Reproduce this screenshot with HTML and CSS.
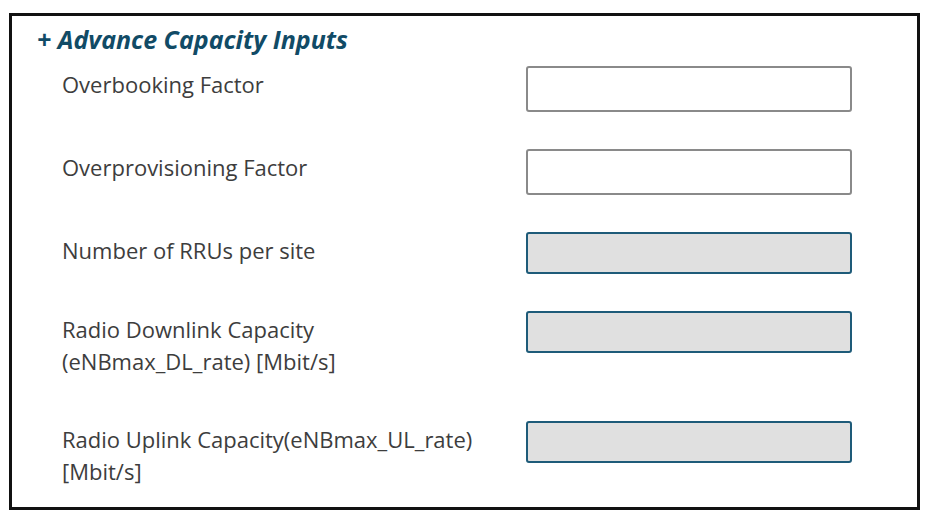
FILE: index.html
```html
<!DOCTYPE html>
<html lang="en">
<head>
<meta charset="utf-8">
<title>Advance Capacity Inputs</title>
<link rel="stylesheet" href="styles.css">
</head>
<body>
<section class="panel">
  <h2 class="panel-title">+ Advance Capacity Inputs</h2>
  <div class="form">
    <div class="row">
      <label class="label" for="f1">Overbooking Factor</label>
      <input class="field field-tall" id="f1" type="text">
    </div>
    <div class="row">
      <label class="label" for="f2">Overprovisioning Factor</label>
      <input class="field field-tall" id="f2" type="text">
    </div>
    <div class="row">
      <label class="label" for="f3">Number of RRUs per site</label>
      <input class="field field-disabled" id="f3" type="text" disabled>
    </div>
    <div class="row">
      <label class="label" for="f4">Radio Downlink Capacity (eNBmax_DL_rate) [Mbit/s]</label>
      <input class="field field-disabled" id="f4" type="text" disabled>
    </div>
    <div class="row">
      <label class="label" for="f5">Radio Uplink Capacity(eNBmax_UL_rate) [Mbit/s]</label>
      <input class="field field-disabled" id="f5" type="text" disabled>
    </div>
  </div>
</section>
</body>
</html>
```
FILE: styles.css
```css
html, body {
  margin: 0;
  padding: 0;
  background: #ffffff;
}

body {
  font-family: "Open Sans", "Noto Sans", "Liberation Sans", sans-serif;
}

.panel {
  box-sizing: border-box;
  width: 911px;
  height: 497px;
  margin: 13px 0 0 9px;
  border: 3px solid #111111;
  padding: 8px 0 0 25px;
  background: #ffffff;
}

.panel-title {
  margin: 0;
  font-size: 25px;
  line-height: 30px;
  font-weight: 700;
  font-style: italic;
  color: #114b66;
}

.form {
  display: flex;
  flex-direction: column;
  gap: 37px;
  margin-top: 12px;
  padding-left: 25px;
}

.row {
  display: flex;
  align-items: flex-start;
}

.label {
  box-sizing: border-box;
  flex: 0 0 464px;
  width: 464px;
  padding: 2px 40px 7px 0;
  font-size: 22px;
  line-height: 32px;
  color: #3d3d3d;
}

.field {
  box-sizing: border-box;
  width: 326px;
  height: 42px;
  margin: 0;
  border-radius: 3px;
  font: inherit;
  outline: none;
}

.field-tall {
  height: 46px;
  border: 2px solid #8a8a8a;
  background: #ffffff;
}

.field-disabled {
  border: 2px solid #1e5b79;
  background: #e0e0e0;
}
```
